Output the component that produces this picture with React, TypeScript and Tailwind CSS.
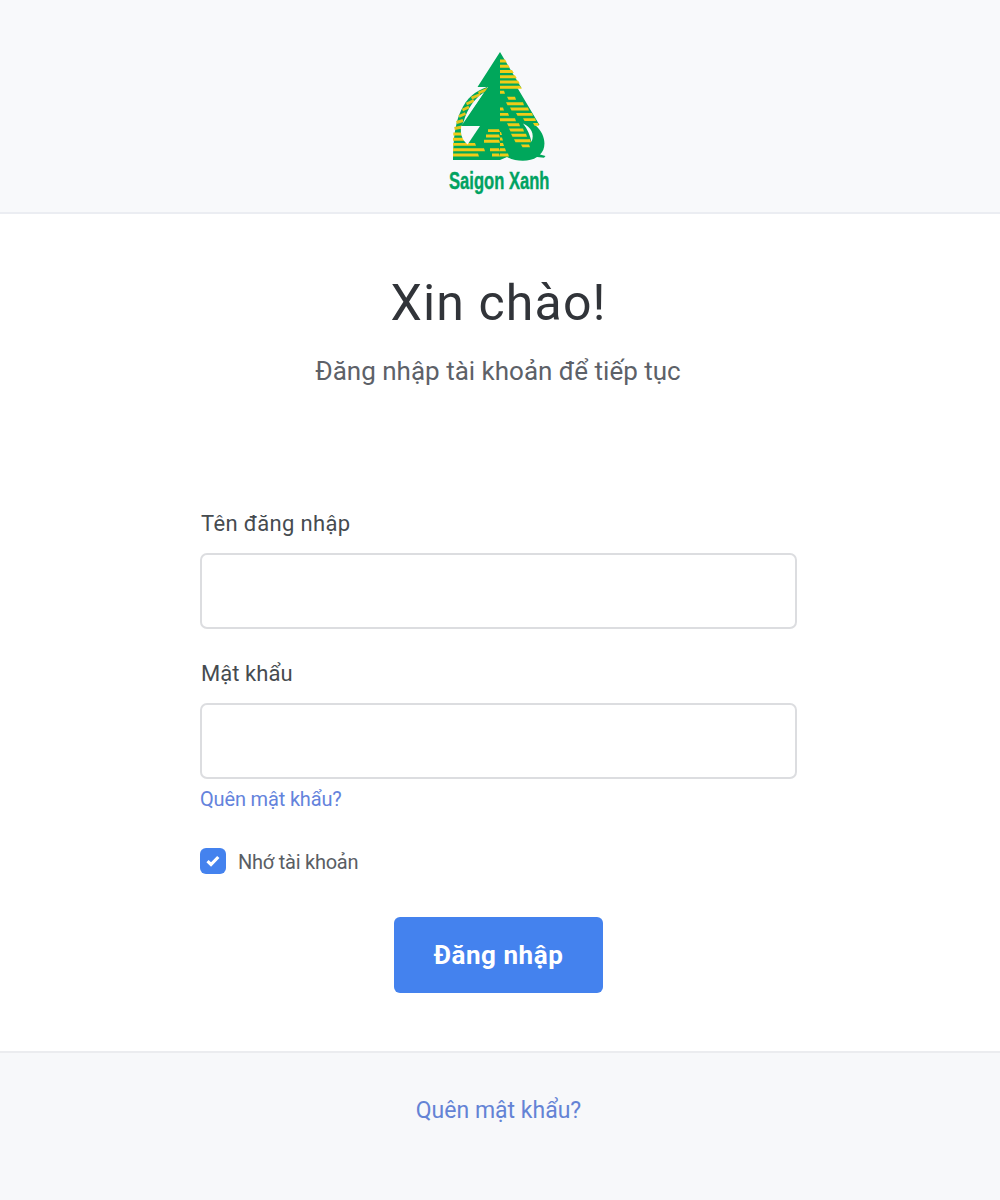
import React from "react";

// Yellow bars of the emblem: [left, right, vertical centre]
const topBars: [number, number, number][] = [
  [500, 506, 61], [500, 509, 66.2], [500, 513, 71.5], [500, 516, 76.8], [500, 519, 82], [500, 521, 87.2],
];
const bars: [number, number, number][] = [
  [500, 505, 92.3], [507, 516, 98.3], [506, 524, 103.7], [510, 529, 109], [516, 533, 114.4], [523, 536, 119.6], [533, 539, 124.4],
  [500, 504, 109], [500, 509, 114.4], [500, 516, 119.8], [507, 520, 124.8], [509, 524, 130], [511, 527, 135.3], [514, 531, 140.7], [521, 530, 145.9],
  [488, 500, 130.6], [486, 500, 136], [484, 500, 141.3], [490, 500, 149.7], [492, 500, 155],
  [500, 502, 133.5], [500, 503, 139], [500, 504, 144.5], [500, 506, 149.7], [500, 509, 155],
  [453.3, 462, 134], [453, 465, 139.2], [453, 476, 144.4], [453, 485, 149.7], [453, 479, 155],
];

function Logo() {
  return (
    <svg viewBox="430 48 140 152" className="h-[152px] w-[140px] overflow-visible" role="img" aria-label="Saigon Xanh">
      <path d="M487 87 C463 95 453 117 453 160 H500 L501 128 Z" fill="#00a75b" />
      <path d="M500 52 L521.5 88 H517.5 L539.5 125 H535 C546 134 547 148 540 154.5 L545.5 156 L544 157.8 L537 157 C530 162 516 162 507 157 L500 160 Z" fill="#00a75b" />
      <g stroke="#e3c41c" strokeWidth="2.9">
        <path d="M478.5 93 L489 88.5 M471.5 98.2 L480 94.5 M466.5 104 L474 100.5 M462.5 110 L469 107 M459 116.5 L465.5 113.5 M456.5 122.5 L463 120.5 M454.5 128.5 L462 127" />
      </g>
      <g fill="#f0cc17">
        {topBars.map(([l, r, y]) => (
          <path key={y} d={`M${l} ${y - 1.5} H${r - 1} L${r + 0.8} ${y + 1.5} H${l} Z`} />
        ))}
        {bars.map(([l, r, y]) => (
          <path key={`${l}-${y}`} d={`M${l} ${y - 1.45} H${r - 1} L${r} ${y + 1.45} H${l + (l > 500 ? 1.5 : 0)} Z`} />
        ))}
      </g>
      <path d="M484.5 92 C475 98 467.5 108 463.5 122 L462 125 Z" fill="#f8f9fb" />
      <path d="M461.2 126 H480 L467.6 144.5 C462 140 460 134 461.2 126 Z" fill="#f8f9fb" />
      <path d="M500 52 L477.5 87 H488 L462.5 126 H500 Z" fill="#00a75b" />
      <path d="M523 123.5 C531 127 535 134 531.5 142 C530 135 527.5 129 523 123.5 Z" fill="#f8f9fb" />
      <text x="449" y="189.3" textLength="100.5" lengthAdjust="spacingAndGlyphs" fontSize="23.8" fontWeight="700" fill="#00a261" stroke="#00a261" strokeWidth="0.4" className="font-['Liberation_Sans']">Saigon Xanh</text>
    </svg>
  );
}

function Field({ id, label, type, tracking }: { id: string; label: string; type: string; tracking: string }) {
  return (
    <div>
      <label htmlFor={id} className={`block h-[30px] pl-px text-[22px] leading-[30px] text-[#464b50] ${tracking}`}>{label}</label>
      <input id={id} type={type} className="mt-[14px] block h-[76px] w-full rounded-[7px] border-2 border-[#dcdde0] bg-white px-5 text-[22px] outline-none" />
    </div>
  );
}

export default function App() {
  return (
    <div className="h-[1200px] w-full bg-white font-['Roboto',sans-serif]">
      <header className="flex h-[214px] justify-center border-b-2 border-[#ebedf2] bg-[#f8f9fb] pt-12">
        <Logo />
      </header>
      <main className="flex h-[837px] flex-col items-center pr-[3px]">
        <h1 className="mt-[58px] h-[62px] text-[50px] leading-[62px] tracking-[1.15px] text-[#313439]">Xin chào!</h1>
        <p className="mt-[19px] h-9 pr-px text-[26px] leading-9 text-[#5d6168]">Đăng nhập tài khoản để tiếp tục</p>
        <form className="mt-[120px] flex w-[597px] flex-col">
          <Field id="username" label="Tên đăng nhập" type="text" tracking="tracking-[0.35px]" />
          <div className="mt-[30px]"><Field id="password" label="Mật khẩu" type="password" tracking="tracking-[0.05px]" /></div>
          <a href="#" className="mt-1.5 h-7 self-start text-[20px] leading-7 tracking-[-0.16px] text-[#6483dc]">Quên mật khẩu?</a>
          <label className="mt-[35px] flex h-[26px] items-center gap-3 text-[20px] tracking-[-0.24px] text-[#5a5e64]">
            <input type="checkbox" defaultChecked className="peer sr-only" />
            <span className="flex size-[26px] items-center justify-center rounded-[6px] bg-[#4482ee]">
              <svg viewBox="0 0 14 12" className="h-3 w-3.5" fill="none" stroke="white" strokeWidth="3.2"><path d="M1.5 6.2 5 9.5 12.3 2" /></svg>
            </span>
            <span className="pt-0.5">Nhớ tài khoản</span>
          </label>
          <button type="button" className="mt-[43px] h-[76px] w-[209px] self-center rounded-[6px] bg-[#4482ee] text-[26px] font-bold tracking-[0.55px] text-white">Đăng nhập</button>
        </form>
      </main>
      <footer className="flex h-[149px] justify-center border-t-2 border-[#ebecef] bg-[#f7f8fa] pt-[42px] pr-[3px]">
        <a href="#" className="h-8 text-[23px] leading-8 text-[#6483d5]">Quên mật khẩu?</a>
      </footer>
    </div>
  );
}
